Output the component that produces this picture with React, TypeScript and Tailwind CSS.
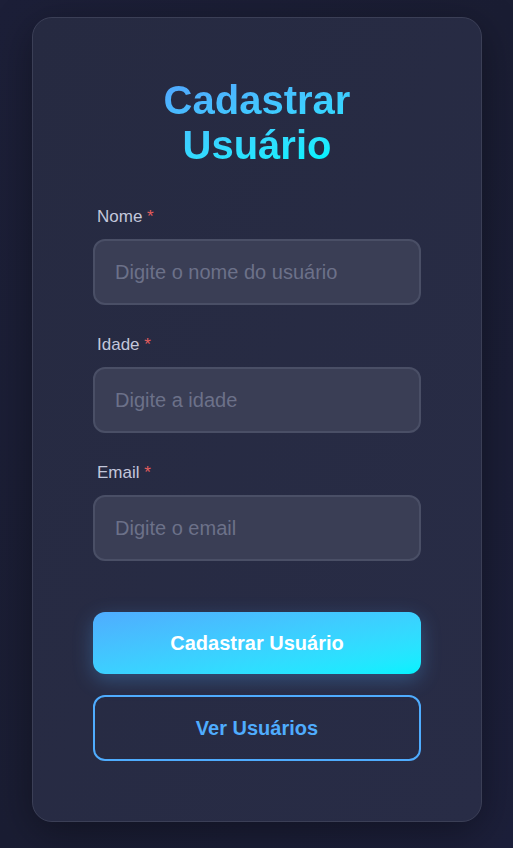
import React from "react";

function Field({ label, placeholder, last }: { label: string; placeholder: string; last?: boolean }) {
  return (
    <div className={last ? "" : "mb-[28px]"}>
      <label className="block ml-[4px] mb-[10px] text-[17px] leading-[24px] text-[#c3c7db]">
        {label} <span className="text-[#e35d5d]">*</span>
      </label>
      <input
        placeholder={placeholder}
        className="w-full h-[66px] px-[20px] rounded-[12px] border-2 border-[#4a4f66] bg-[#3a3e55] text-[20px] text-[#e5e7f0] placeholder:text-[#6c7189] outline-none"
      />
    </div>
  );
}

export default function App() {
  return (
    <div
      className="min-h-screen bg-gradient-to-br from-[#1c1f38] via-[#1a1d33] to-[#1c1f3a] pt-[17px] pb-[25px]"
      style={{ fontFamily: '"Liberation Sans", Arial, sans-serif' }}
    >
      <div className="w-[450px] ml-[32px] rounded-[20px] border border-[#3b3f56] bg-gradient-to-br from-[#262a41] to-[#282c46] px-[60px] py-[60px] shadow-[0_10px_40px_rgba(0,0,0,0.35)]">
        <h1 className="text-center text-[40px] leading-[45px] font-bold bg-gradient-to-br from-[#4facfe] from-20% to-[#00f2fe] to-80% bg-clip-text text-transparent mb-[37px]">
          Cadastrar Usuário
        </h1>
        <form>
          <Field label="Nome" placeholder="Digite o nome do usuário" />
          <Field label="Idade" placeholder="Digite a idade" />
          <Field label="Email" placeholder="Digite o email" last />
          <button
            type="button"
            className="mt-[51px] w-full h-[62px] rounded-[12px] bg-gradient-to-br from-[#4facfe] to-[#00f2fe] text-white font-bold text-[20px] shadow-[0_6px_20px_rgba(79,172,254,0.3)]"
          >
            Cadastrar Usuário
          </button>
          <button
            type="button"
            className="mt-[21px] w-full h-[66px] rounded-[12px] border-2 border-[#4facfe] bg-transparent text-[#4facfe] font-bold text-[20px]"
          >
            Ver Usuários
          </button>
        </form>
      </div>
    </div>
  );
}
